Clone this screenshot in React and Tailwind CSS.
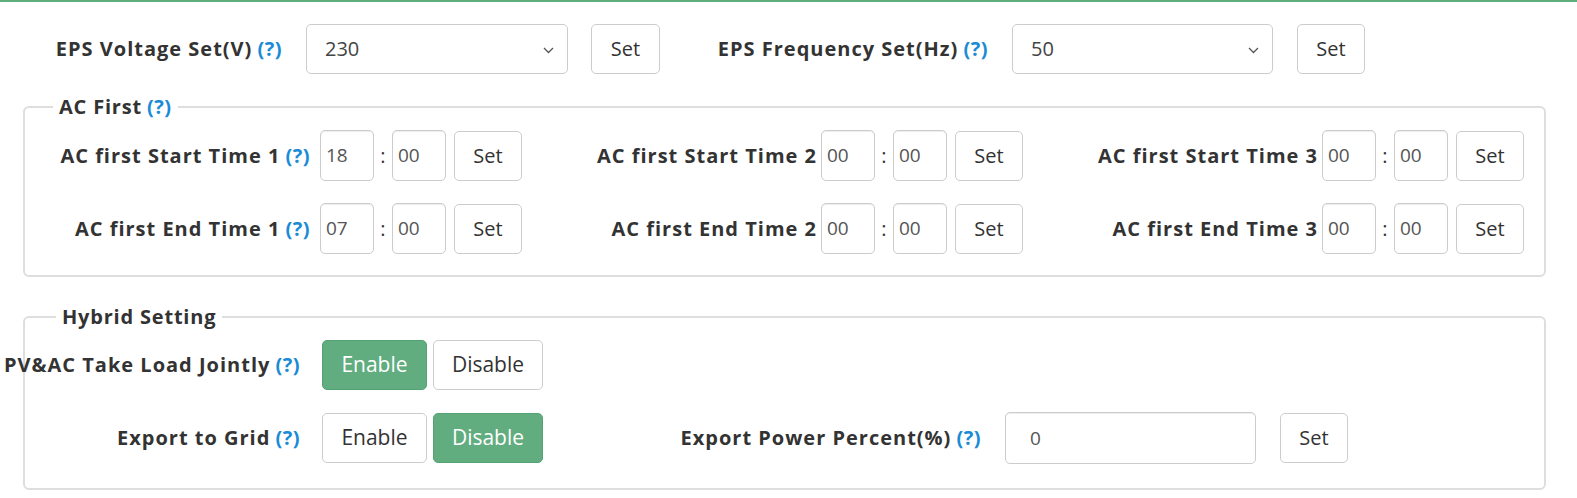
import React from "react";

const Q = ({ cls = "" }) => (
  <span className={"text-[#1b8bd6] ml-[5px] tracking-[0.5px] " + cls}>(?)</span>
);

const LBL = "flex justify-end whitespace-nowrap font-bold text-[20px] tracking-[1px] text-[#333]";

const Chevron = () => (
  <svg width="11" height="7" viewBox="0 0 11 7" className="absolute right-[13px] top-[22px]">
    <path d="M1 1 L5.5 5.5 L10 1" fill="none" stroke="#555" strokeWidth="1.3" />
  </svg>
);

const Select = ({ value, w }) => (
  <div className={"relative h-[50px] rounded-[5px] border border-[#ccc] bg-white flex items-center pl-[18px] text-[20px] text-[#444] " + w}>
    {value}
    <Chevron />
  </div>
);

const SetBtn = ({ cls = "" }) => (
  <button className={"h-[50px] w-[68px] rounded-[5px] border border-[#ccc] bg-white text-[20px] text-[#333] flex items-center justify-center " + cls}>
    Set
  </button>
);

const TimeInput = ({ v }) => (
  <div className="h-[51px] w-[54px] rounded-[5px] border border-[#ccc] bg-white shadow-[inset_0_1px_1px_rgba(0,0,0,0.075)] flex items-center pl-[5px] text-[19px] text-[#555]">
    {v}
  </div>
);

const TimeCol = ({ label, q, h, m, qcls }) => (
  <div className="flex items-center">
    <div className={"w-[290px] " + LBL}>
      {label}
      {q && <Q cls={qcls} />}
    </div>
    <div className="ml-[4px] flex items-center">
      <TimeInput v={h} />
      <div className="w-[18px] text-center text-[20px] text-[#333]">:</div>
      <TimeInput v={m} />
      <SetBtn cls="ml-[8px]" />
    </div>
  </div>
);

const Toggle = ({ label, on, active }) => (
  <button
    className={
      "h-[50px] rounded-[5px] border text-[21px] flex items-center justify-center " +
      (active
        ? "bg-[#62ad7f] border-[#55a373] text-white "
        : "bg-white border-[#ccc] text-[#333] ") +
      on
    }
  >
    {label}
  </button>
);

export default function App() {
  return (
    <div
      className="w-[1577px] h-[498px] bg-white overflow-hidden border-t-2 border-[#5fae7e] text-[#333]"
      style={{ fontFamily: "'Open Sans', 'Noto Sans', sans-serif" }}
    >
      {/* Top row */}
      <div className="flex items-center pt-[22px]">
        <div className={"w-[282px] " + LBL}>
          EPS Voltage Set(V)
          <Q />
        </div>
        <Select value="230" w="ml-[24px] w-[262px]" />
        <SetBtn cls="ml-[23px] w-[69px]" />
        <div className={"ml-[61px] w-[267px] " + LBL}>
          EPS Frequency Set(Hz)
          <Q />
        </div>
        <Select value="50" w="ml-[24px] w-[261px]" />
        <SetBtn cls="ml-[24px]" />
      </div>

      {/* AC First */}
      <fieldset className="ml-[23px] mr-[31px] mt-[21px] border-2 border-[#dedede] rounded-[6px] pt-[11px] pb-[21px]">
        <legend className="ml-[28px] px-[6px] font-bold text-[20px] tracking-[0.8px] leading-[24px]">
          AC First<Q />
        </legend>
        <div className="grid grid-cols-[501px_501px_501px] gap-y-[22px] pl-[1px]">
          <TimeCol label="AC first Start Time 1" q h="18" m="00" qcls="mr-[6px]" />
          <TimeCol label="AC first Start Time 2" h="00" m="00" />
          <TimeCol label="AC first Start Time 3" h="00" m="00" />
          <TimeCol label="AC first End Time 1" q h="07" m="00" qcls="mr-[6px]" />
          <TimeCol label="AC first End Time 2" h="00" m="00" />
          <TimeCol label="AC first End Time 3" h="00" m="00" />
        </div>
      </fieldset>

      {/* Hybrid Setting */}
      <fieldset className="ml-[23px] mr-[31px] mt-[28px] border-2 border-[#dedede] rounded-[6px] pt-[11px] pb-[24px]">
        <legend className="ml-[31px] px-[6px] font-bold text-[20px] tracking-[0.8px] leading-[24px]">
          Hybrid Setting
        </legend>
        <div className="flex flex-col gap-y-[22px]">
          <div className="flex items-center">
            <div className={"w-[275px] " + LBL}>
              PV&amp;AC Take Load Jointly
              <Q />
            </div>
            <Toggle label="Enable" active on="ml-[22px] w-[105px]" />
            <Toggle label="Disable" on="ml-[6px] w-[110px]" />
          </div>
          <div className="flex items-center">
            <div className={"w-[275px] " + LBL}>
              Export to Grid
              <Q />
            </div>
            <Toggle label="Enable" on="ml-[22px] w-[105px]" />
            <Toggle label="Disable" active on="ml-[6px] w-[110px]" />
            <div className={"ml-[145px] w-[293px] " + LBL}>
              Export Power Percent(%)
              <Q />
            </div>
            <div className="ml-[24px] w-[251px] h-[52px] rounded-[5px] border border-[#ccc] bg-white shadow-[inset_0_1px_1px_rgba(0,0,0,0.075)] flex items-center pl-[24px] text-[19px] text-[#555]">
              0
            </div>
            <SetBtn cls="ml-[24px]" />
          </div>
        </div>
      </fieldset>
    </div>
  );
}
